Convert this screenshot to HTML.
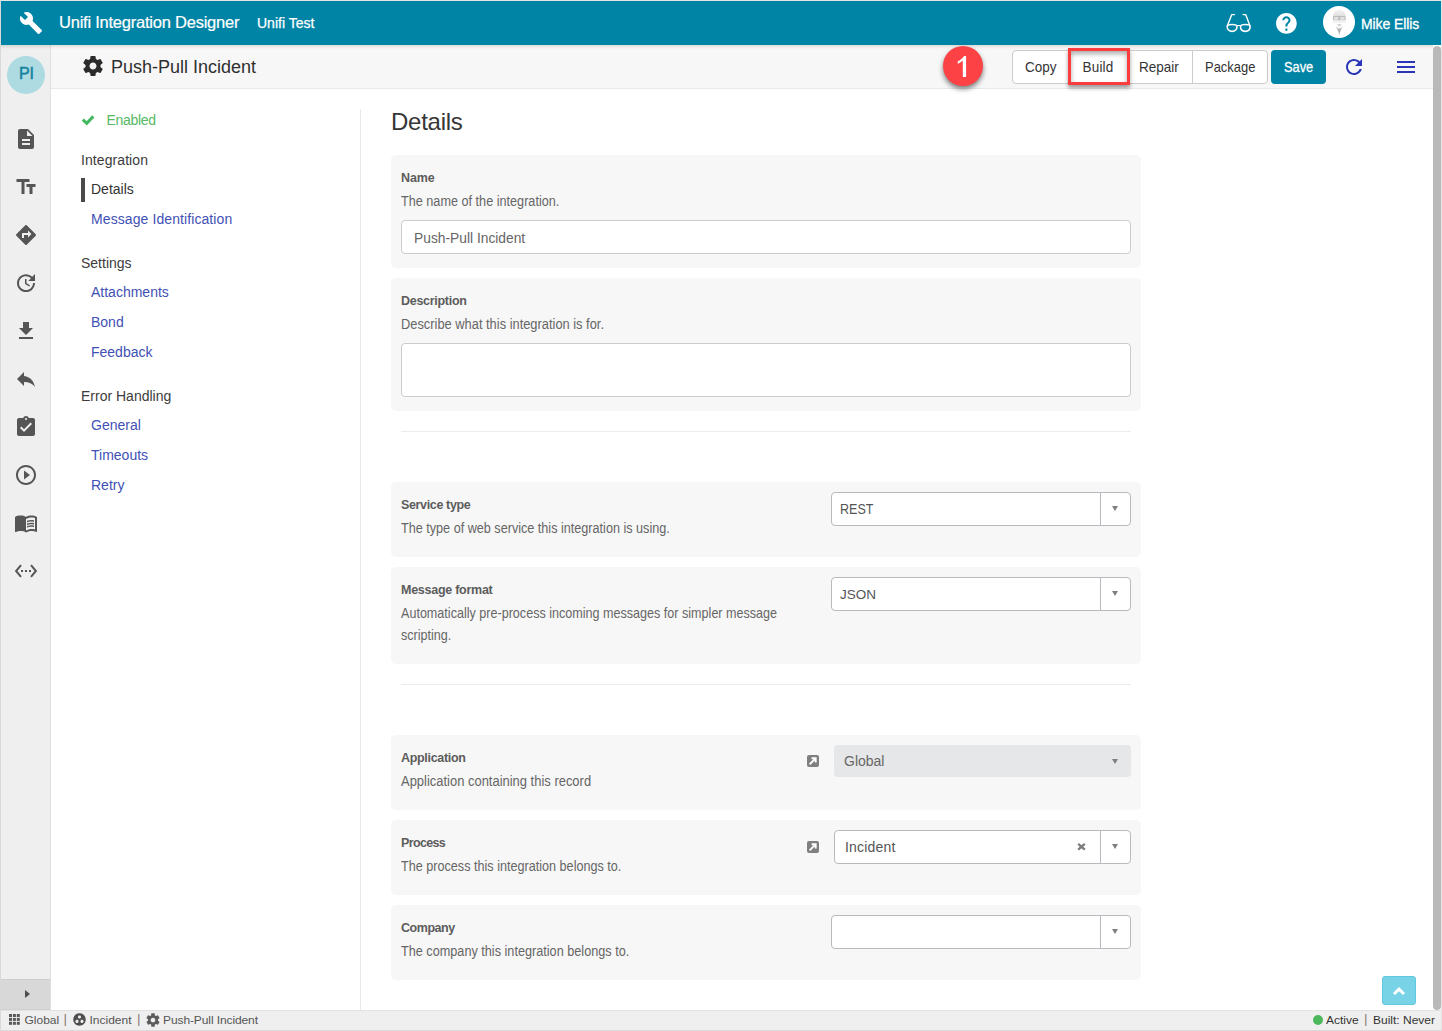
<!DOCTYPE html>
<html>
<head>
<meta charset="utf-8">
<title>Unifi Integration Designer</title>
<style>
*{box-sizing:border-box;margin:0;padding:0}
html,body{width:1442px;height:1031px;overflow:hidden;background:#fff}
body{position:relative;font-family:"Liberation Sans",sans-serif;color:#333;font-size:13px}
.abs{position:absolute}
.t{position:absolute;white-space:nowrap;line-height:1}
/* frame */
#frameL{left:0;top:0;width:1px;height:1031px;background:#d9d9d9}
#frameT{left:0;top:0;width:1442px;height:1px;background:#e4e4e4}
#frameR{left:1441px;top:0;width:1px;height:1031px;background:#e4e4e4}
/* top bar */
#topbar{left:1px;top:1px;width:1440px;height:44px;background:#0084a5}
#topbar .t{color:#fff}
/* side bar */
#side{left:1px;top:45px;width:49px;height:965px;background:#efefef}
#sideB{left:50px;top:45px;width:1px;height:965px;background:#e0e0e0}
#sideFoot{left:1px;top:979px;width:49px;height:31px;background:#d8d8d8;border-top:1px solid #cecece;border-bottom:1px solid #cfcfcf}
#pi{left:7px;top:56px;width:38px;height:38px;border-radius:50%;background:#aedae2}
.si{position:absolute;left:14px;width:24px;height:24px}
.si path{fill:#555}
/* sub header */
#sub{left:51px;top:45px;width:1382px;height:43px;background:#f7f7f7}
#subB{left:51px;top:88px;width:1382px;height:1px;background:#e9e9e9}
#subShadow{left:1px;top:45px;width:1432px;height:4px;background:linear-gradient(rgba(0,0,0,.10),rgba(0,0,0,0))}
/* nav */
#navB{left:360px;top:109px;width:1px;height:901px;background:#e9e9e9}
.nh{color:#3c3c3c;font-size:14px}
.nl{color:#3f51b5;font-size:14px}
/* cards */
.card{position:absolute;left:391px;width:750px;background:#f7f7f7;border-radius:5px}
.lbl{font-weight:bold;color:#5c5c5c;font-size:12.5px;transform:scaleY(1.08);transform-origin:0 84.65%}
.hlp{color:#666;font-size:12.5px;transform:scaleY(1.11);transform-origin:0 84.65%}
.inp{position:absolute;background:#fff;border:1px solid #ccc;border-radius:4px}
.sel{position:absolute;left:831px;width:300px;height:34px;background:#fff;border:1px solid #b9b9c0;border-radius:4px}
.sel:after{content:"";position:absolute;left:268px;top:0;width:1px;height:32px;background:#b9b9c0}
.s2:after{left:265px !important}
.caret{position:absolute;width:0;height:0;margin:-.7px 0 0 -.3px;border-left:3.600px solid transparent;border-right:3.600px solid transparent;border-top:5.300px solid #808080}
.hr{position:absolute;left:401px;width:730px;height:1px;background:#ececec}
/* status */
#status{left:1px;top:1010px;width:1440px;height:21px;background:#efefef;border-top:1px solid #e2e2e2}
.st{font-size:12px;color:#555;transform:scaleY(.91);transform-origin:0 84.65%}
.sp{color:#8a7a74;font-size:13.5px !important;margin-top:-1.500px}
/* toolbar buttons */
#btng{left:1012px;top:50px;width:256px;height:34px;background:#fff;border:1px solid #ccc;border-radius:4px}
.bd{position:absolute;top:51px;width:1px;height:32px;background:#ccc}
.bt{color:#333;font-size:13.5px;transform:scaleY(1.045);transform-origin:0 84.65%}
#save{left:1271px;top:50px;width:55px;height:34px;background:#0084a5;border-radius:4px}
#hl{left:1068px;top:48px;width:62px;height:37px;border:3px solid #fd3c3e;box-shadow:0 3px 4px rgba(0,0,0,.38), inset 0 3px 5px rgba(0,0,0,.32)}
#one{left:943px;top:46px;width:40px;height:40px;border-radius:50%;background:#fc4244;box-shadow:0 3px 5px rgba(0,0,0,.5)}
#scroll{left:1433px;top:46px;width:8px;height:964px;background:#b9b9b9;border-radius:4px}
#totop{left:1382px;top:976px;width:34px;height:29px;background:#79d3e6;border:1px solid #62c8e0;border-radius:3px}
</style>
</head>
<body>
<!-- TOP BAR -->
<div id="topbar" class="abs"></div>
<div id="frameL" class="abs"></div><div id="frameT" class="abs"></div><div id="frameR" class="abs"></div>

<svg class="abs" style="left:19px;top:11px;width:24px;height:24px" viewBox="0 0 24 24"><path fill="#fff" d="M22.7 19l-9.1-9.1c.9-2.3.4-5-1.5-6.9-2-2-5-2.4-7.4-1.3L9 6 6 9 1.6 4.7C.4 7.1.9 10.1 2.9 12.1c1.9 1.9 4.6 2.4 6.9 1.5l9.1 9.1c.4.4 1 .4 1.4 0l2.3-2.3c.5-.4.5-1.1.1-1.4z"/></svg>
<div class="t" id="ttl" style="left:59px;top:13.800px;font-size:16.5px;color:#fff;letter-spacing:-.23px;-webkit-text-stroke:.2px #fff">Unifi Integration Designer</div>
<div class="t" id="ttl2" style="left:257px;top:16.300px;font-size:14px;color:#fff;-webkit-text-stroke:.25px #fff">Unifi Test</div>

<!-- glasses -->
<svg class="abs" style="left:1224px;top:11px;width:29px;height:24px" viewBox="0 0 29 24"><g fill="none" stroke="#fff" stroke-width="1.600" stroke-linecap="round" stroke-linejoin="round"><path d="M3.200 15.600C3.200 13.900 4.600 13.500 8.100 13.500S13 13.900 13 15.600C13 18.400 11 20.400 8.100 20.400S3.200 18.400 3.200 15.600Z"/><path d="M16.500 15.600C16.500 13.900 17.900 13.500 21.300 13.500S26.100 13.900 26.100 15.600C26.100 18.400 24.200 20.400 21.300 20.400S16.500 18.400 16.500 15.600Z"/><path d="M13 14.500h3.500" stroke-width="1.200"/><path d="M3.400 14.800 7.800 3.600H10.400" stroke-width="1.400"/><path d="M25.900 14.800 21.700 3.600H19.100" stroke-width="1.400"/></g></svg>
<!-- help -->
<svg class="abs" style="left:1274.450px;top:10.550px;width:24.800px;height:24.800px" viewBox="0 0 24 24"><path fill="#fff" d="M12 2C6.480 2 2 6.480 2 12s4.480 10 10 10 10-4.480 10-10S17.520 2 12 2zm1 17h-2v-2h2v2zm2.070-7.750l-.9.920C13.450 12.900 13 13.500 13 15h-2v-.5c0-1.100.450-2.100 1.170-2.830l1.240-1.260c.370-.360.590-.860.590-1.410 0-1.100-.9-2-2-2s-2 .9-2 2H8c0-2.210 1.790-4 4-4s4 1.790 4 4c0 .880-.360 1.680-.930 2.250z"/></svg>
<!-- avatar -->
<svg class="abs" style="left:1323px;top:6px;width:32px;height:32px" viewBox="0 0 32 32"><defs><linearGradient id="hd" x1="0" y1="0" x2="0" y2="1"><stop offset="0" stop-color="#f4f4f4"/><stop offset="1" stop-color="#dedede"/></linearGradient><linearGradient id="gt" x1="0" y1="0" x2="0" y2="1"><stop offset="0" stop-color="#e6e6e6"/><stop offset=".55" stop-color="#a6a6a6"/><stop offset="1" stop-color="#ececec"/></linearGradient></defs><circle cx="16" cy="16" r="16" fill="#fff"/><path d="M10 10.500C10 1.500 22.600 1.500 22.600 10.500Z" fill="url(#hd)"/><rect x="9.900" y="10.100" width="12.800" height="4.500" rx=".8" fill="#bcbcbc"/><rect x="10.800" y="11" width="4.500" height="2.800" rx=".8" fill="#e2e2e2"/><rect x="17.200" y="11" width="4.500" height="2.800" rx=".8" fill="#e2e2e2"/><rect x="10" y="14.600" width="12.600" height="2.500" fill="#f3f3f3"/><path d="M14.300 18h4l-.6 2.300h-2.800z" fill="#d4d4d4"/><path d="M12.300 19.800Q16.200 24.500 20.200 19.800L17.300 25.500 16.300 30 15.300 25.500Z" fill="url(#gt)"/></svg>
<div class="t" id="usr" style="left:1361px;top:16.500px;font-size:14px;color:#fff;-webkit-text-stroke:.3px #fff;letter-spacing:-.1px">Mike Ellis</div>

<!-- SIDE BAR -->
<div id="side" class="abs"></div><div id="sideB" class="abs"></div><div id="sideFoot" class="abs"></div>
<!-- SUB HEADER -->
<div id="sub" class="abs"></div><div id="subB" class="abs"></div><div id="subShadow" class="abs"></div>
<div id="pi" class="abs"></div>
<div class="t" id="pitx" style="left:18.900px;top:66.200px;font-size:16px;color:#1583a0;-webkit-text-stroke:.5px #1583a0">PI</div>

<svg class="si" style="top:127px" viewBox="0 0 24 24"><path d="M14 2H6c-1.100 0-1.990.9-1.990 2L4 20c0 1.100.890 2 1.990 2H18c1.100 0 2-.9 2-2V8l-6-6zm2 16H8v-2h8v2zm0-4H8v-2h8v2zm-3-5V3.500L18.500 9H13z"/></svg>
<svg class="si" style="top:175px" viewBox="0 0 24 24"><path d="M2.500 4v3h5v12h3V7h5V4h-13zm19 5h-9v3h3v7h3v-7h3V9z"/></svg>
<svg class="si" style="top:223px" viewBox="0 0 24 24"><path d="M21.710 11.290l-9-9c-.390-.390-1.020-.390-1.410 0l-9 9c-.390.390-.390 1.020 0 1.410l9 9c.390.390 1.020.390 1.410 0l9-9c.390-.380.390-1.010 0-1.410zM14 14.500V12h-4v3H8v-4c0-.550.450-1 1-1h5V7.500l3.500 3.500-3.500 3.500z"/></svg>
<svg class="si" style="top:271px" viewBox="0 0 24 24"><path d="M21 10.120h-6.780l2.740-2.820c-2.730-2.700-7.150-2.800-9.880-.1-2.730 2.710-2.730 7.080 0 9.790 2.730 2.710 7.150 2.710 9.880 0C18.320 15.650 19 14.080 19 12.100h2c0 1.980-.880 4.550-2.640 6.290-3.510 3.480-9.210 3.480-12.720 0-3.500-3.470-3.530-9.110-.020-12.580 3.510-3.470 9.140-3.470 12.650 0L21 3v7.120zM12.500 8v4.250l3.500 2.080-.720 1.210L11 13V8h1.500z"/></svg>
<svg class="si" style="top:319px" viewBox="0 0 24 24"><path d="M19 9h-4V3H9v6H5l7 7 7-7zM5 18v2h14v-2H5z"/></svg>
<svg class="si" style="top:367px" viewBox="0 0 24 24"><path d="M10 9V5l-7 7 7 7v-4.100c5 0 8.500 1.600 11 5.100-1-5-4-10-11-11z"/></svg>
<svg class="si" style="top:415px" viewBox="0 0 24 24"><path d="M19 3h-4.180C14.400 1.840 13.300 1 12 1c-1.300 0-2.400.840-2.820 2H5c-1.100 0-2 .9-2 2v14c0 1.100.9 2 2 2h14c1.100 0 2-.9 2-2V5c0-1.100-.9-2-2-2zm-7 0c.550 0 1 .450 1 1s-.450 1-1 1-1-.450-1-1 .450-1 1-1zm-2 14l-4-4 1.410-1.410L10 14.170l6.590-6.590L18 9l-8 8z"/></svg>
<svg class="si" style="top:463px" viewBox="0 0 24 24"><path d="M10 16.500l6-4.500-6-4.500v9zM12 2C6.480 2 2 6.480 2 12s4.480 10 10 10 10-4.480 10-10S17.520 2 12 2zm0 18c-4.410 0-8-3.590-8-8s3.590-8 8-8 8 3.590 8 8-3.590 8-8 8z"/></svg>
<svg class="si" style="top:511px" viewBox="0 0 24 24"><path d="M21 5c-1.110-.350-2.330-.5-3.500-.5-1.950 0-4.050.4-5.500 1.500-1.450-1.100-3.550-1.500-5.500-1.500S2.450 4.900 1 6v14.650c0 .250.250.5.5.5.1 0 .150-.050.250-.050C3.100 20.450 5.050 20 6.500 20c1.950 0 4.050.4 5.500 1.500 1.350-.850 3.800-1.500 5.500-1.500 1.650 0 3.350.3 4.750 1.050.1.050.150.050.250.050.250 0 .5-.250.5-.5V6c-.6-.450-1.250-.750-2-1zm0 13.500c-1.100-.350-2.300-.5-3.500-.5-1.700 0-4.150.650-5.500 1.500V8c1.350-.850 3.800-1.500 5.500-1.500 1.200 0 2.400.150 3.500.5v11.500z"/><path d="M17.500 10.500c.880 0 1.730.090 2.500.260V9.240c-.790-.150-1.640-.240-2.500-.240-1.700 0-3.240.290-4.500.830v1.660c1.130-.640 2.700-.990 4.500-.990zM13 12.490v1.660c1.130-.640 2.700-.990 4.500-.990.880 0 1.730.090 2.500.260V11.900c-.790-.150-1.640-.240-2.500-.240-1.700 0-3.240.3-4.500.830zM17.500 14.330c-1.700 0-3.240.290-4.500.830v1.660c1.130-.640 2.700-.990 4.500-.990.880 0 1.730.090 2.500.260v-1.520c-.790-.160-1.640-.240-2.500-.240z"/></svg>
<svg class="si" style="top:559px" viewBox="0 0 24 24"><path d="M7.770 6.760L6.230 5.480.820 12l5.410 6.520 1.540-1.280L3.420 12l4.350-5.240zM7 13h2v-2H7v2zm10-2h-2v2h2v-2zm-6 2h2v-2h-2v2zm6.770-7.520l-1.540 1.280L20.580 12l-4.350 5.240 1.540 1.280L23.180 12l-5.410-6.520z"/></svg>
<div class="abs" style="left:24.600px;top:990px;width:0;height:0;border-top:4.500px solid transparent;border-bottom:4.500px solid transparent;border-left:5.600px solid #4d4d4d"></div>

<!-- sub header title -->
<svg class="abs" style="left:81px;top:54px;width:24px;height:24px" viewBox="0 0 24 24"><path fill="#2b2b2b" d="M19.430 12.980c.040-.320.070-.640.070-.980s-.030-.660-.070-.980l2.110-1.650c.190-.150.240-.420.120-.640l-2-3.460c-.120-.220-.390-.3-.610-.220l-2.490 1c-.520-.4-1.080-.730-1.690-.980l-.380-2.650C14.460 2.180 14.250 2 14 2h-4c-.250 0-.460.180-.490.420l-.380 2.650c-.610.250-1.170.590-1.690.980l-2.490-1c-.230-.090-.490 0-.610.220l-2 3.460c-.130.220-.070.490.120.640l2.110 1.650c-.040.320-.070.650-.070.980s.030.660.070.980l-2.110 1.650c-.190.150-.240.420-.120.640l2 3.460c.120.220.390.3.610.220l2.490-1c.520.4 1.080.730 1.690.980l.380 2.650c.030.240.240.420.490.420h4c.250 0 .460-.180.490-.420l.380-2.650c.610-.250 1.170-.590 1.690-.980l2.490 1c.230.090.490 0 .610-.220l2-3.460c.120-.220.070-.490-.120-.640l-2.110-1.650zM12 15.500c-1.930 0-3.500-1.570-3.500-3.500s1.570-3.500 3.500-3.500 3.500 1.570 3.500 3.500-1.570 3.500-3.500 3.500z"/></svg>
<div class="t" id="ptitle" style="left:111px;top:58px;font-size:18px;color:#2f2f2f">Push-Pull Incident</div>

<!-- toolbar -->
<div id="one" class="abs"></div>
<svg class="abs" style="left:943px;top:46px;width:40px;height:40px" viewBox="943 46 40 40"><path fill="#fff" d="M966.100 77H962.800V60.600C961.500 61.800 959.800 63 957.800 63.900V61.200C960.600 59.900 963 57.800 964 55.900H966.100Z"/></svg>
<div id="btng" class="abs"></div>
<div class="bd" style="left:1069px"></div><div class="bd" style="left:1129px"></div><div class="bd" style="left:1192px"></div>
<div id="hl" class="abs"></div>
<div class="t bt" id="b1" style="left:1025px;top:60.600px">Copy</div>
<div class="t bt" id="b2" style="left:1082.600px;top:60.600px;letter-spacing:.15px">Build</div>
<div class="t bt" id="b3" style="left:1139px;top:60.600px">Repair</div>
<div class="t bt" id="b4" style="left:1204.500px;top:60.600px;transform:scale(.96,1.045);transform-origin:0 84.65%">Package</div>
<div id="save" class="abs"></div>
<div class="t" id="b5" style="left:1283.500px;top:60.600px;font-size:13.5px;color:#fff;transform:scale(.95,1.045);transform-origin:0 84.65%;-webkit-text-stroke:.25px #fff">Save</div>
<svg class="abs" style="left:1341.600px;top:55px;width:24px;height:24px" viewBox="0 0 24 24"><path fill="#2a35b8" d="M17.650 6.350C16.200 4.900 14.210 4 12 4c-4.420 0-7.990 3.580-7.990 8s3.570 8 7.990 8c3.730 0 6.840-2.550 7.730-6h-2.080c-.820 2.330-3.040 4-5.650 4-3.310 0-6-2.690-6-6s2.690-6 6-6c1.660 0 3.140.690 4.220 1.780L13 11h7V4l-2.350 2.350z"/></svg>
<div class="abs" style="left:1397px;top:61px;width:18px;height:2px;background:#2a35b8"></div>
<div class="abs" style="left:1397px;top:66px;width:18px;height:2px;background:#2a35b8"></div>
<div class="abs" style="left:1397px;top:71px;width:18px;height:2px;background:#2a35b8"></div>
<div id="scroll" class="abs"></div>

<!-- NAV -->
<div id="navB" class="abs"></div>
<svg class="abs" style="left:81px;top:114px;width:14px;height:12px" viewBox="0 0 14 12"><path fill="none" stroke="#44b85f" stroke-width="3" d="M1.800 5.700 5.700 9.300 12.300 2.400"/></svg>
<div class="t" id="n0" style="left:106.500px;top:113.300px;font-size:14px;color:#55b964;letter-spacing:-.32px">Enabled</div>
<div class="t nh" id="n1" style="left:81px;top:153px;letter-spacing:.08px">Integration</div>
<div class="abs" style="left:81px;top:178px;width:4px;height:24px;background:#4a4a4a"></div>
<div class="t nh" id="n2" style="left:91px;top:182px;color:#333">Details</div>
<div class="t nl" id="n3" style="left:91px;top:212px;letter-spacing:.09px">Message Identification</div>
<div class="t nh" id="n4" style="left:81px;top:256px">Settings</div>
<div class="t nl" id="n5" style="left:91px;top:285px">Attachments</div>
<div class="t nl" id="n6" style="left:91px;top:315px">Bond</div>
<div class="t nl" id="n7" style="left:91px;top:345px">Feedback</div>
<div class="t nh" id="n8" style="left:81px;top:389px">Error Handling</div>
<div class="t nl" id="n9" style="left:91px;top:418px">General</div>
<div class="t nl" id="n10" style="left:91px;top:448px">Timeouts</div>
<div class="t nl" id="n11" style="left:91px;top:478px">Retry</div>

<!-- MAIN -->
<div class="t" id="h1" style="left:391px;top:110px;font-size:24px;color:#363636;letter-spacing:-.25px">Details</div>

<div class="card" style="top:155px;height:113px"></div>
<div class="t lbl" id="l1" style="letter-spacing:-0.137px;left:401px;top:171.7px">Name</div>
<div class="t hlp" id="p1" style="font-size:12.66px;left:401px;top:195.7px">The name of the integration.</div>
<div class="inp" style="left:401px;top:220px;width:730px;height:34px"></div>
<div class="t" id="v1" style="left:414px;top:232px;font-size:13.8px;color:#666">Push-Pull Incident</div>

<div class="card" style="top:278px;height:133px"></div>
<div class="t lbl" id="l2" style="letter-spacing:-0.288px;left:401px;top:294.7px">Description</div>
<div class="t hlp" id="p2" style="font-size:12.86px;left:401px;top:318.7px">Describe what this integration is for.</div>
<div class="inp" style="left:401px;top:343px;width:730px;height:54px"></div>

<div class="hr" style="top:431px"></div>

<div class="card" style="top:482px;height:75px"></div>
<div class="t lbl" id="l3" style="letter-spacing:-0.356px;left:401px;top:498.7px">Service type</div>
<div class="t hlp" id="p3" style="font-size:12.64px;left:401px;top:522.7px">The type of web service this integration is using.</div>
<div class="sel" style="top:492px"></div><div class="caret" style="left:1112.500px;top:506.500px"></div>
<div class="t" id="v3" style="left:840px;top:502.500px;font-size:13.5px;color:#555;transform:scale(.93,1.045);transform-origin:0 84.65%">REST</div>

<div class="card" style="top:567px;height:97px"></div>
<div class="t lbl" id="l4" style="letter-spacing:-0.264px;left:401px;top:583.7px">Message format</div>
<div class="t hlp" id="p4" style="font-size:12.58px;left:401px;top:607.7px">Automatically pre-process incoming messages for simpler message</div>
<div class="t hlp" id="p4b" style="font-size:12.58px;left:401px;top:629.7px">scripting.</div>
<div class="sel" style="top:577px"></div><div class="caret" style="left:1112.500px;top:591.500px"></div>
<div class="t" id="v4" style="left:840px;top:587.500px;font-size:13.5px;color:#555">JSON</div>

<div class="hr" style="top:684px"></div>

<div class="card" style="top:735px;height:75px"></div>
<div class="t lbl" id="l5" style="letter-spacing:-0.315px;left:401px;top:751.7px">Application</div>
<div class="t hlp" id="p5" style="font-size:12.96px;left:401px;top:775.7px">Application containing this record</div>
<div class="abs" style="left:834px;top:745px;width:297px;height:32px;background:#e6e7e8;border-radius:4px"></div><div class="caret" style="left:1112.500px;top:759.500px"></div>
<div class="t" id="v5" style="left:844px;top:754px;font-size:14px;color:#666">Global</div>

<div class="card" style="top:820px;height:75px"></div>
<div class="t lbl" id="l6" style="letter-spacing:-0.637px;left:401px;top:836.7px">Process</div>
<div class="t hlp" id="p6" style="font-size:12.63px;left:401px;top:860.7px">The process this integration belongs to.</div>
<div class="sel s2" style="top:830px;left:834px;width:297px"></div><div class="caret" style="left:1112.500px;top:844.700px"></div>
<div class="t" id="v6" style="left:845px;top:840px;font-size:14px;letter-spacing:.2px;color:#555">Incident</div>

<div class="card" style="top:905px;height:75px"></div>
<div class="t lbl" id="l7" style="letter-spacing:-0.450px;left:401px;top:921.7px">Company</div>
<div class="t hlp" id="p7" style="font-size:12.68px;left:401px;top:945.7px">The company this integration belongs to.</div>
<div class="sel" style="top:915px"></div><div class="caret" style="left:1112.500px;top:929.500px"></div>

<svg class="abs" style="left:807px;top:755px;width:12px;height:12px" viewBox="0 0 12 12"><rect width="12" height="12" rx="2" fill="#808080"/><path d="M2.600 9.400 8.300 3.700M4.600 3.300h4.100v4.100" fill="none" stroke="#fff" stroke-width="1.900"/></svg>
<svg class="abs" style="left:807px;top:841px;width:12px;height:12px" viewBox="0 0 12 12"><rect width="12" height="12" rx="2" fill="#808080"/><path d="M2.600 9.400 8.300 3.700M4.600 3.300h4.100v4.100" fill="none" stroke="#fff" stroke-width="1.900"/></svg>
<svg class="abs" style="left:1077px;top:843px;width:9px;height:8px" viewBox="0 0 9 8"><path d="M1.200 0.900 7.800 6.700M7.800 0.900 1.200 6.700" fill="none" stroke="#7c7c7c" stroke-width="2.300"/></svg>
<div id="totop" class="abs"></div>
<svg class="abs" style="left:1392px;top:986px;width:14px;height:10px" viewBox="0 0 14 10"><path fill="none" stroke="#fff" stroke-width="3" d="M2 8 7 3.200 12 8"/></svg>

<!-- STATUS BAR -->
<div id="status" class="abs"></div>
<svg class="abs" style="left:9.200px;top:1014px;width:10.800px;height:10.800px" viewBox="0 0 10.800 10.800" fill="#595959"><rect x="0" y="0" width="3" height="3"/><rect x="3.9" y="0" width="3" height="3"/><rect x="7.8" y="0" width="3" height="3"/><rect x="0" y="3.9" width="3" height="3"/><rect x="3.9" y="3.9" width="3" height="3"/><rect x="7.8" y="3.9" width="3" height="3"/><rect x="0" y="7.8" width="3" height="3"/><rect x="3.9" y="7.8" width="3" height="3"/><rect x="7.8" y="7.8" width="3" height="3"/></svg>
<div class="t st" id="s1" style="left:24.5px;top:1014px">Global</div>
<div class="t st sp" id="s2" style="left:63.500px;top:1013.500px">|</div>
<svg class="abs" style="left:72px;top:1012px;width:15px;height:15px" viewBox="0 0 24 24"><path fill="#4f4f4f" d="M12 2C6.480 2 2 6.480 2 12s4.480 10 10 10 10-4.480 10-10S17.520 2 12 2zM8 17.500c-1.380 0-2.500-1.120-2.500-2.500s1.120-2.500 2.500-2.500 2.500 1.120 2.500 2.500-1.120 2.500-2.500 2.500zM9.500 8c0-1.380 1.120-2.500 2.500-2.500s2.500 1.120 2.500 2.500-1.120 2.500-2.500 2.500S9.500 9.380 9.500 8zm6.500 9.500c-1.380 0-2.500-1.120-2.500-2.500s1.120-2.500 2.500-2.500 2.500 1.120 2.500 2.500-1.120 2.500-2.500 2.500z"/></svg>
<div class="t st" id="s3" style="left:89.500px;top:1014px">Incident</div>
<div class="t st sp" id="s4" style="left:137px;top:1013.500px">|</div>
<svg class="abs" style="left:145px;top:1012px;width:16px;height:16px" viewBox="0 0 24 24"><path fill="#5c5c5c" d="M19.430 12.980c.040-.320.070-.640.070-.980s-.030-.660-.070-.980l2.110-1.650c.190-.150.240-.420.120-.640l-2-3.460c-.120-.220-.390-.3-.610-.220l-2.490 1c-.520-.4-1.080-.730-1.690-.980l-.380-2.650C14.460 2.180 14.250 2 14 2h-4c-.250 0-.460.180-.490.420l-.380 2.650c-.610.250-1.170.590-1.690.980l-2.490-1c-.230-.090-.490 0-.610.220l-2 3.460c-.130.220-.070.490.120.640l2.110 1.650c-.040.320-.070.650-.070.980s.030.660.070.980l-2.110 1.650c-.190.150-.240.420-.120.640l2 3.460c.120.220.390.3.610.220l2.490-1c.520.4 1.080.730 1.690.980l.380 2.650c.030.240.240.420.490.420h4c.250 0 .460-.180.490-.420l.380-2.650c.610-.250 1.170-.590 1.690-.980l2.490 1c.230.090.490 0 .610-.220l2-3.460c.120-.220.070-.490-.120-.640l-2.110-1.650zM12 15.500c-1.930 0-3.500-1.570-3.500-3.500s1.570-3.500 3.500-3.500 3.500 1.570 3.500 3.500-1.570 3.500-3.500 3.500z"/></svg>
<div class="t st" id="s5" style="left:163px;top:1014px;letter-spacing:-.1px">Push-Pull Incident</div>
<div class="abs" style="left:1313px;top:1015px;width:10px;height:10px;border-radius:50%;background:#4cb85c"></div>
<div class="t st" id="s6" style="left:1326px;top:1014px;color:#333">Active</div>
<div class="t st sp" id="s7" style="left:1364px;top:1013.500px">|</div>
<div class="t st" id="s8" style="left:1373px;top:1014px;color:#333">Built: Never</div>
<div class="abs" style="left:0;top:1030px;width:1442px;height:1px;background:#dcdcdc"></div>
</body>
</html>
